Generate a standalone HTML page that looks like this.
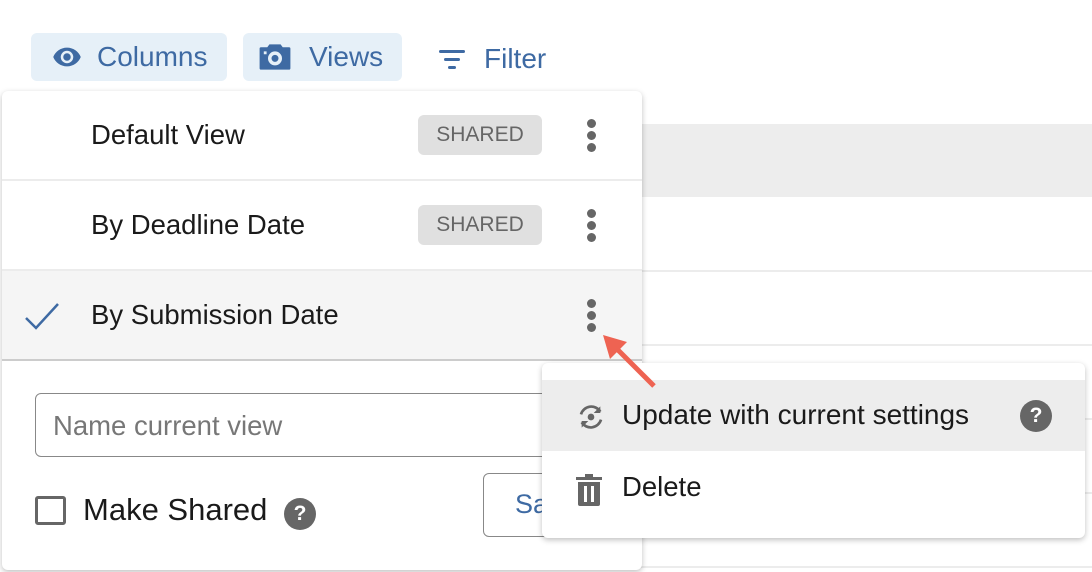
<!DOCTYPE html>
<html><head><style>
*{box-sizing:border-box;margin:0;padding:0}
body{width:1092px;height:572px;background:#fff;font-family:"Liberation Sans",Roboto,sans-serif;position:relative;overflow:hidden}
.abs{position:absolute}
.btn{position:absolute;top:33px;height:48px;border-radius:6px;background:#e6f0f8;color:#3e6aa3;font-size:28px;display:flex;align-items:center}
.bgline{position:absolute;left:640px;right:0;height:2px;background:#ececec}
.panel{position:absolute;left:2px;top:91px;width:640px;height:479px;background:#fff;border-radius:6px;box-shadow:0 2px 6px rgba(0,0,0,.25)}
.row{position:absolute;left:0;width:640px;height:90px;border-bottom:2px solid #ececec}
.row .t{position:absolute;left:89px;top:28px;font-size:27.5px;color:#1a1a1a}
.badge{position:absolute;left:416px;top:24px;width:124px;height:40px;background:#e0e0e0;border-radius:6px;color:#666;font-size:21px;display:flex;align-items:center;justify-content:center}
.dots{position:absolute;left:584px;top:29px;width:12px}
.dots i{display:block;width:9px;height:9px;border-radius:50%;background:#666;margin-bottom:3px}
.menu{position:absolute;left:542px;top:363px;width:543px;height:175px;background:#fff;border-radius:6px;box-shadow:0 2px 6px rgba(0,0,0,.25)}
.q{position:absolute;width:32px;height:32px;border-radius:50%;background:#666;color:#fff;font-weight:bold;font-size:21px;display:flex;align-items:center;justify-content:center}
</style></head><body>
<div class="abs" style="left:640px;right:0;top:124px;height:73px;background:#ededed"></div>
<div class="bgline" style="top:270px"></div>
<div class="bgline" style="top:344px"></div>
<div class="bgline" style="top:418px"></div>
<div class="bgline" style="top:492px"></div>
<div class="bgline" style="top:566px"></div>

<div class="btn" style="left:31px;width:196px">
<svg class="abs" style="left:19px;top:9px" width="34" height="30" viewBox="0 0 24 24"><path fill="#3e6aa3" d="M12 4.5C7 4.5 2.7 7.6 1 12c1.7 4.4 6 7.5 11 7.5s9.3-3.1 11-7.5c-1.7-4.4-6-7.5-11-7.5zM12 17a5 5 0 1 1 0-10 5 5 0 0 1 0 10zm0-8a3 3 0 1 0 0 6 3 3 0 0 0 0-6z"/></svg>
<span class="abs" style="left:66px">Columns</span></div>
<div class="btn" style="left:243px;width:159px">
<svg class="abs" style="left:15px;top:10px" width="34" height="28" viewBox="0 0 24 20"><path fill="#3e6aa3" d="M8 1 6.5 3H2a1 1 0 0 0-1 1v14a1 1 0 0 0 1 1h20a1 1 0 0 0 1-1V4a1 1 0 0 0-1-1h-4.5L16 1zM12 6a5 5 0 1 1 0 10 5 5 0 0 1 0-10zm0 2.5a2.5 2.5 0 1 0 0 5 2.5 2.5 0 0 0 0-5zM4 6h2v2H4z"/></svg>
<span class="abs" style="left:66px">Views</span></div>
<svg class="abs" style="left:439px;top:50px" width="26" height="20" viewBox="0 0 26 20"><rect x="0" y="0" width="26" height="3" rx="1.5" fill="#3e6aa3"/><rect x="5" y="8" width="16" height="3" rx="1.5" fill="#3e6aa3"/><rect x="9" y="16" width="8" height="3" rx="1.5" fill="#3e6aa3"/></svg>
<div class="abs" style="left:484px;top:43px;font-size:28px;color:#3e6aa3">Filter</div>

<div class="panel">
<div class="row" style="top:0"><div class="t">Default View</div><div class="badge">SHARED</div><div class="dots" style="left:585px;top:28px"><i></i><i></i><i></i></div></div>
<div class="row" style="top:90px"><div class="t">By Deadline Date</div><div class="badge">SHARED</div><div class="dots" style="left:585px;top:28px"><i></i><i></i><i></i></div></div>
<div class="row" style="top:180px;background:#f5f5f5;border-bottom:2px solid #ccc"><svg class="abs" style="left:22px;top:30px" width="36" height="30" viewBox="0 0 36 30"><path d="M2 17l10 10L34 3" fill="none" stroke="#3e6aa3" stroke-width="2.5"/></svg><div class="t">By Submission Date</div><div class="dots" style="left:585px;top:28px"><i></i><i></i><i></i></div></div>
<div class="abs" style="left:33px;top:302px;width:560px;height:64px;border:1.5px solid #888;border-radius:6px"><span class="abs" style="left:17px;top:16px;font-size:27.5px;color:#777">Name current view</span></div>
<div class="abs" style="left:33px;top:405px;width:31px;height:29px;border:3px solid #666;border-radius:3px"></div>
<div class="abs" style="left:81px;top:401px;font-size:31px;color:#1a1a1a">Make Shared</div>
<div class="q" style="left:282px;top:407px">?</div>
<div class="abs" style="left:481px;top:382px;width:120px;height:64px;border:1.5px solid #888;border-radius:6px"><span class="abs" style="left:31px;top:15px;font-size:27px;color:#3e6aa3">Save</span></div>
</div>

<div class="menu">
<div class="abs" style="left:0;top:17px;width:543px;height:71px;background:#ededed"></div>
<svg class="abs" style="left:33px;top:38px" width="32" height="32" viewBox="0 0 24 24"><path fill="none" stroke="#666" stroke-width="2" d="M4.5 10A8 8 0 0 1 19 8M19.5 14A8 8 0 0 1 5 16"/><path fill="#666" d="M19 4v5h-5zM5 20v-5h5z"/><circle cx="12" cy="12" r="2.5" fill="#666"/></svg>
<div class="abs" style="left:80px;top:36px;font-size:28px;color:#1a1a1a">Update with current settings</div>
<div class="q" style="left:478px;top:37px">?</div>
<svg class="abs" style="left:34px;top:111px" width="26" height="32" viewBox="0 0 26 32"><rect x="0" y="3" width="26" height="3" fill="#666"/><rect x="9" y="0" width="8" height="4" fill="#666"/><path fill="#666" d="M2 8h22v22a2 2 0 0 1-2 2H4a2 2 0 0 1-2-2zM8 12v16h3V12zm7 0v16h3V12z"/></svg>
<div class="abs" style="left:80px;top:108px;font-size:27.5px;color:#1a1a1a">Delete</div>
</div>

<svg class="abs" style="left:598px;top:330px;z-index:5" width="64" height="62" viewBox="0 0 64 62"><path d="M56 56 16 16" stroke="#ee6352" stroke-width="5"/><path d="M5 5l24 7-17 17z" fill="#ee6352"/></svg>
</body></html>
